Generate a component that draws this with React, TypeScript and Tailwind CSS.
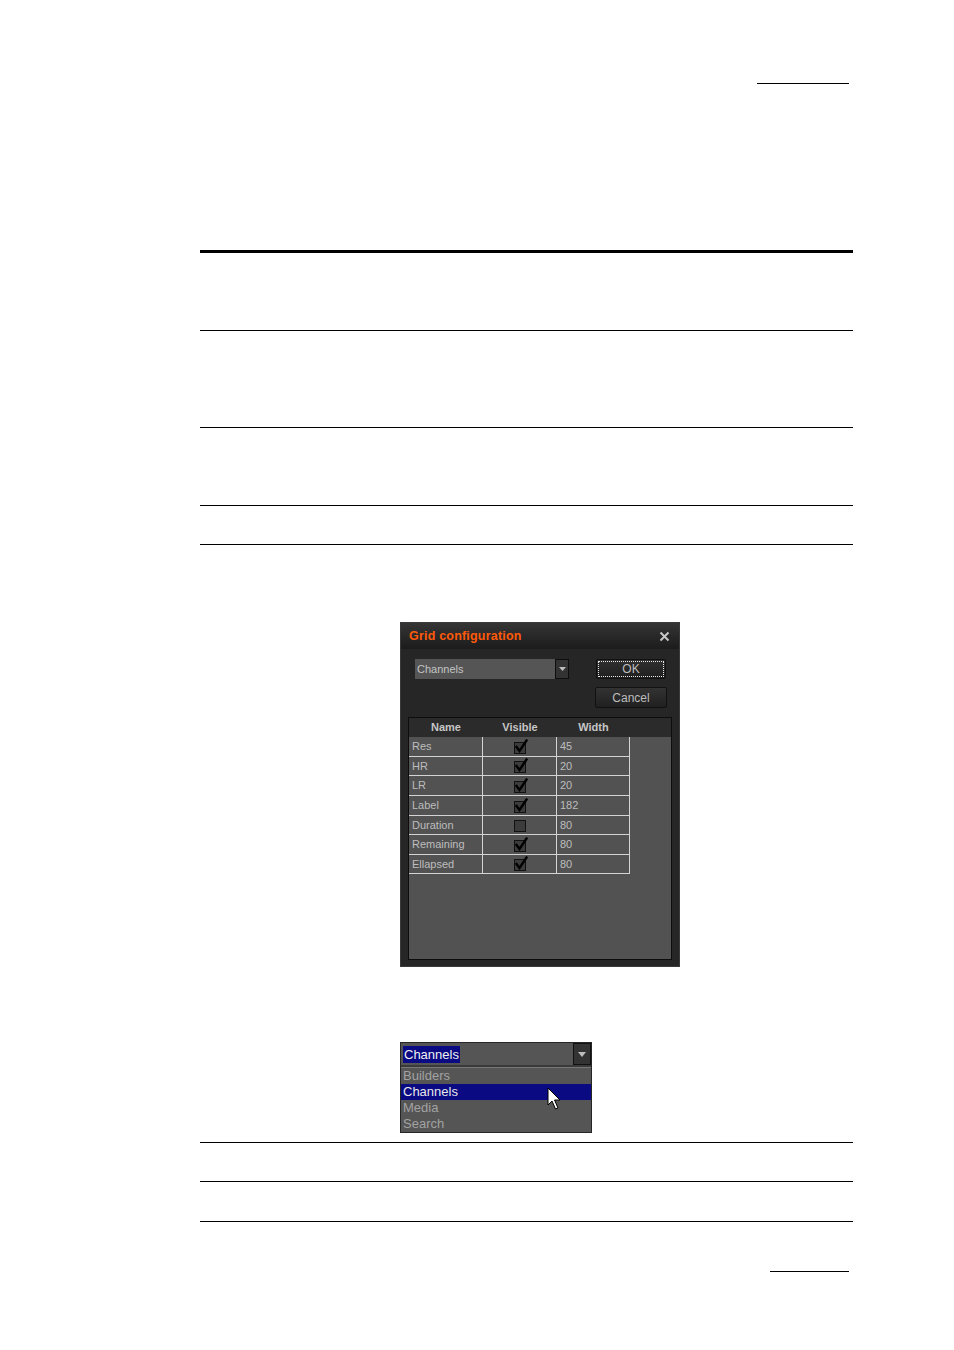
import React from 'react'

const ROWS = [
  { name: 'Res', visible: true, width: '45', h: 'h-[20px]' },
  { name: 'HR', visible: true, width: '20', h: 'h-[19px]' },
  { name: 'LR', visible: true, width: '20', h: 'h-[20px]' },
  { name: 'Label', visible: true, width: '182', h: 'h-[20px]' },
  { name: 'Duration', visible: false, width: '80', h: 'h-[19px]' },
  { name: 'Remaining', visible: true, width: '80', h: 'h-[20px]' },
  { name: 'Ellapsed', visible: true, width: '80', h: 'h-[19px]' },
]

const OPTIONS = ['Builders', 'Channels', 'Media', 'Search']

function Rule({ className }: { className: string }) {
  return <div className={`bg-black ${className}`} />
}

function CheckBox({ checked }: { checked: boolean }) {
  return (
    <svg width="16" height="16" viewBox="0 0 16 16" className="block">
      <rect x="1.5" y="3.5" width="11" height="11" fill="#3c3c3c" stroke="#111" />
      {checked && (
        <path d="M3.5 8 L6.5 12 L13.5 1.5" fill="none" stroke="#000" strokeWidth="2.4" strokeLinecap="square" />
      )}
    </svg>
  )
}

function GridDialog() {
  return (
    <div className="ml-[400px] flex h-[345px] w-[280px] flex-col border border-[#3a3a3a] bg-[#262626] font-['Liberation_Sans',sans-serif]">
      {/* title bar */}
      <div className="flex h-[26px] shrink-0 items-center justify-between bg-gradient-to-b from-[#353535] to-[#1c1c1c] pl-[8px] pr-[9px]">
        <span className="text-[12.5px] font-bold tracking-[0.2px] text-[#ff5a0a]">Grid configuration</span>
        <svg width="11" height="11" viewBox="0 0 11 11">
          <path d="M1.5 1.5 L9.5 9.5 M9.5 1.5 L1.5 9.5" stroke="#c8c8c8" strokeWidth="2" />
        </svg>
      </div>

      {/* controls */}
      <div className="flex pl-[14px] pr-[12px] pt-[10px]">
        <div className="flex h-[20px] w-[154px]">
          <div className="flex flex-1 items-center bg-[#555555] pl-[2px] text-[11px] text-[#c4c4c4]">Channels</div>
          <div className="flex w-[14px] items-center justify-center border border-[#0e0e0e] bg-[#333333]">
            <svg width="7" height="4" viewBox="0 0 7 4">
              <path d="M0 0 H7 L3.5 4 Z" fill="#bdbdbd" />
            </svg>
          </div>
        </div>
        <div className="ml-auto flex flex-col gap-[8px]">
          <button className="ml-[1px] flex h-[20px] w-[70px] items-center justify-center rounded-[2px] border border-[#111] bg-gradient-to-b from-[#303030] to-[#1f1f1f] p-[1px]">
            <span className="flex h-full w-full items-center justify-center border border-dotted border-[#e8e8e8] text-[12px] text-[#bdbdbd]">OK</span>
          </button>
          <button className="flex h-[21px] w-[72px] items-center justify-center rounded-[2px] border border-[#111] bg-gradient-to-b from-[#333333] to-[#202020] text-[12px] text-[#bdbdbd]">
            Cancel
          </button>
        </div>
      </div>

      {/* grid */}
      <div className="mx-[7px] mt-[9px] mb-[6px] flex flex-1 flex-col border border-[#0c0c0c] bg-[#525252]">
        <div className="flex h-[19px] shrink-0 items-center bg-[#2b2b2b] text-[11px] font-bold text-[#c6c6c6]">
          <span className="w-[74px] text-center">Name</span>
          <span className="w-[74px] text-center">Visible</span>
          <span className="w-[73px] text-center">Width</span>
        </div>
        <div className="flex w-[221px] flex-col">
          {ROWS.map((r) => (
            <div key={r.name} className={`flex ${r.h} border-b border-[#d4d4d4] text-[11px] text-[#bdbdbd]`}>
              <div className="flex w-[74px] items-center border-r border-[#d4d4d4] pl-[3px]">{r.name}</div>
              <div className="flex w-[74px] items-center justify-center border-r border-[#d4d4d4] pl-[2px]">
                <CheckBox checked={r.visible} />
              </div>
              <div className="flex w-[73px] items-center border-r border-[#d4d4d4] pl-[3px]">{r.width}</div>
            </div>
          ))}
        </div>
      </div>
    </div>
  )
}

function ComboList() {
  return (
    <div className="relative ml-[400px] flex h-[91px] w-[192px] flex-col border border-[#262626] bg-[#3a3a3a] font-['Liberation_Sans',sans-serif] text-[13px]">
      <div className="flex h-[23px] items-center bg-[#555555] pl-[2px]">
        <span className="bg-[#0a0a82] px-[1px] leading-[17px] text-[#f0f0f0]">Channels</span>
        <div className="ml-auto flex h-full w-[18px] items-center justify-center border border-[#111] bg-[#333333]">
          <svg width="8" height="5" viewBox="0 0 8 5">
            <path d="M0 0 H8 L4 5 Z" fill="#bdbdbd" />
          </svg>
        </div>
      </div>
      <div className="mt-[2px] flex flex-1 flex-col border-t border-[#777] bg-[#555555]">
        {OPTIONS.map((o) => (
          <div
            key={o}
            className={`flex h-[16px] items-center pl-[2px] ${o === 'Channels' ? 'bg-[#0a0a82] text-[#e8e8e8]' : 'text-[#a2a2a2]'}`}
          >
            {o}
          </div>
        ))}
      </div>
      {/* mouse pointer */}
      <svg width="16" height="26" viewBox="0 0 16 26" className="absolute left-[146px] top-[44px]">
        <path d="M1 1 L1 18 L5 14 L8.5 22 L11 21 L7.5 13 L13 13 Z" fill="#fff" stroke="#000" strokeWidth="1" strokeLinejoin="miter" />
      </svg>
    </div>
  )
}

export default function App() {
  return (
    <div className="h-[1350px] w-[954px] bg-white pt-[83px]">
      <Rule className="ml-[757px] h-px w-[92px]" />
      <Rule className="ml-[200px] mt-[166px] h-[3px] w-[653px]" />
      <Rule className="ml-[200px] mt-[77px] h-px w-[653px]" />
      <Rule className="ml-[200px] mt-[96px] h-px w-[653px]" />
      <Rule className="ml-[200px] mt-[77px] h-px w-[653px]" />
      <Rule className="ml-[200px] mt-[38px] h-px w-[653px]" />

      <div className="mt-[77px]">
        <GridDialog />
      </div>

      <div className="mt-[75px]">
        <ComboList />
      </div>

      <Rule className="ml-[200px] mt-[9px] h-px w-[653px]" />
      <Rule className="ml-[200px] mt-[38px] h-px w-[653px]" />
      <Rule className="ml-[200px] mt-[39px] h-px w-[653px]" />
      <Rule className="ml-[770px] mt-[49px] h-px w-[79px]" />
    </div>
  )
}
